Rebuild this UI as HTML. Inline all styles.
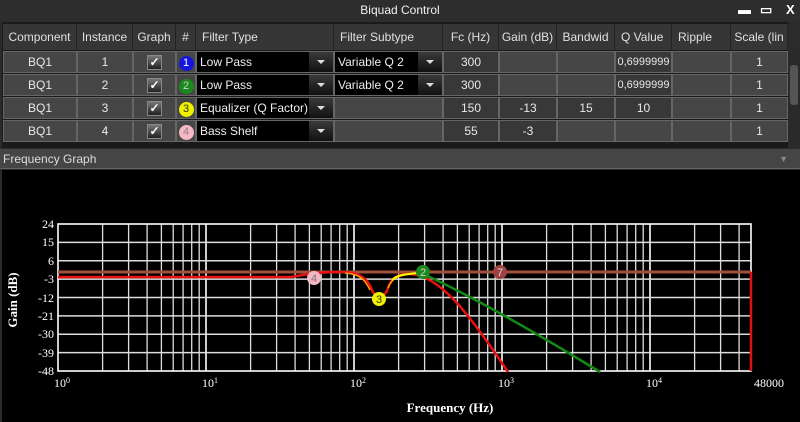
<!DOCTYPE html>
<html><head><meta charset="utf-8"><style>
*{margin:0;padding:0;box-sizing:border-box}
body{width:800px;height:422px;background:#2b2b2b;overflow:hidden;font-family:"Liberation Sans",sans-serif;color:#e8e8e8;position:relative}
.t{position:absolute;left:0;top:0;width:800px;height:22px;background:#2d2d2d;text-align:center;font-size:12px;line-height:20px;color:#f0f0f0}
.wb{position:absolute;top:2px;font-size:13px;font-weight:bold;color:#fff}
.c{position:absolute;font-size:12px;text-align:center;overflow:hidden;white-space:nowrap}
.h{background:#363636;color:#e0e0e0;height:26px;line-height:26px;top:24px;border-right:1px solid #222}
.d{background:#464646;border:1px solid #666;height:22px;line-height:20px}
.dk{background:#383838}
.sel{background:#000;text-align:left;padding-left:3px;color:#eee}
.arr{position:absolute;right:0;top:0;width:24px;height:100%;background:linear-gradient(#3a3a3a,#111)}
.arr:after{content:"";position:absolute;left:8px;top:8px;border:4px solid transparent;border-top:4px solid #ddd}
.cb{display:inline-block;width:15px;height:15px;background:linear-gradient(#777,#222);border:1px solid #888;margin-top:2px;font-size:12px;line-height:13px;color:#fff;font-weight:bold}
.n{display:inline-block;width:15px;height:15px;border-radius:50%;font-size:11px;line-height:15px;margin-top:2px}
</style></head><body>
<div class="t">Biquad Control</div>
<div class="wb" style="left:738px">▬</div><div class="wb" style="left:760px">▭</div><div class="wb" style="left:786px">X</div>
<div style="position:absolute;left:2px;top:22px;width:786px;height:126px;background:#1a1a1a"></div>
<div class="c h" style="left:3px;width:74px">Component</div>
<div class="c h" style="left:77px;width:56px">Instance</div>
<div class="c h" style="left:133px;width:43px">Graph</div>
<div class="c h" style="left:176px;width:20px">#</div>
<div class="c h" style="left:196px;width:138px;text-align:left;padding-left:6px">Filter Type</div>
<div class="c h" style="left:334px;width:109px;text-align:left;padding-left:6px">Filter Subtype</div>
<div class="c h" style="left:443px;width:56px">Fc (Hz)</div>
<div class="c h" style="left:499px;width:58px">Gain (dB)</div>
<div class="c h" style="left:557px;width:58px">Bandwid</div>
<div class="c h" style="left:615px;width:57px;text-align:left;padding-left:6px">Q Value</div>
<div class="c h" style="left:672px;width:59px;text-align:left;padding-left:6px">Ripple</div>
<div class="c h" style="left:731px;width:57px">Scale (lin</div>
<div style="position:absolute;left:788px;top:50px;width:12px;height:92px;background:#2a2a2a"><div style="margin:15px 2px;height:40px;background:#555;border-radius:3px"></div></div>

<!-- rows -->
<div id="rows"></div>
<div class="c d" style="left:3px;top:51px;width:74px">BQ1</div><div class="c d" style="left:77px;top:51px;width:56px">1</div><div class="c d" style="left:133px;top:51px;width:43px"><span class="cb">✓</span></div><div class="c d" style="left:176px;top:51px;width:20px"><span class="n" style="background:#1515e0;color:#fff">1</span></div><div class="c d sel" style="left:196px;top:51px;width:138px">Low Pass<div class="arr"></div></div><div class="c d sel" style="left:334px;top:51px;width:109px">Variable Q 2<div class="arr"></div></div><div class="c d dk" style="left:443px;top:51px;width:56px">300</div><div class="c d" style="left:499px;top:51px;width:58px"></div><div class="c d" style="left:557px;top:51px;width:58px"></div><div class="c d dk" style="left:615px;top:51px;width:57px;font-size:11px">0,6999999</div><div class="c d" style="left:672px;top:51px;width:59px"></div><div class="c d" style="left:731px;top:51px;width:57px">1</div>

<div class="c d" style="left:3px;top:74px;width:74px">BQ1</div><div class="c d" style="left:77px;top:74px;width:56px">2</div><div class="c d" style="left:133px;top:74px;width:43px"><span class="cb">✓</span></div><div class="c d" style="left:176px;top:74px;width:20px"><span class="n" style="background:#1a8a1a;color:#ccc">2</span></div><div class="c d sel" style="left:196px;top:74px;width:138px">Low Pass<div class="arr"></div></div><div class="c d sel" style="left:334px;top:74px;width:109px">Variable Q 2<div class="arr"></div></div><div class="c d dk" style="left:443px;top:74px;width:56px">300</div><div class="c d" style="left:499px;top:74px;width:58px"></div><div class="c d" style="left:557px;top:74px;width:58px"></div><div class="c d dk" style="left:615px;top:74px;width:57px;font-size:11px">0,6999999</div><div class="c d" style="left:672px;top:74px;width:59px"></div><div class="c d" style="left:731px;top:74px;width:57px">1</div>

<div class="c d" style="left:3px;top:97px;width:74px">BQ1</div><div class="c d" style="left:77px;top:97px;width:56px">3</div><div class="c d" style="left:133px;top:97px;width:43px"><span class="cb">✓</span></div><div class="c d" style="left:176px;top:97px;width:20px"><span class="n" style="background:#f0f000;color:#333">3</span></div><div class="c d sel" style="left:196px;top:97px;width:138px">Equalizer (Q Factor)<div class="arr"></div></div><div class="c d" style="left:334px;top:97px;width:109px"></div><div class="c d dk" style="left:443px;top:97px;width:56px">150</div><div class="c d dk" style="left:499px;top:97px;width:58px">-13</div><div class="c d dk" style="left:557px;top:97px;width:58px">15</div><div class="c d dk" style="left:615px;top:97px;width:57px">10</div><div class="c d" style="left:672px;top:97px;width:59px"></div><div class="c d" style="left:731px;top:97px;width:57px">1</div>

<div class="c d" style="left:3px;top:120px;width:74px">BQ1</div><div class="c d" style="left:77px;top:120px;width:56px">4</div><div class="c d" style="left:133px;top:120px;width:43px"><span class="cb">✓</span></div><div class="c d" style="left:176px;top:120px;width:20px"><span class="n" style="background:#f5b8c4;color:#888">4</span></div><div class="c d sel" style="left:196px;top:120px;width:138px">Bass Shelf<div class="arr"></div></div><div class="c d" style="left:334px;top:120px;width:109px"></div><div class="c d dk" style="left:443px;top:120px;width:56px">55</div><div class="c d dk" style="left:499px;top:120px;width:58px">-3</div><div class="c d" style="left:557px;top:120px;width:58px"></div><div class="c d" style="left:615px;top:120px;width:57px"></div><div class="c d" style="left:672px;top:120px;width:59px"></div><div class="c d" style="left:731px;top:120px;width:57px">1</div>

<div style="position:absolute;left:0;top:149px;width:800px;height:20px;background:#454545;border-bottom:1px solid #666;font-size:12px;line-height:20px;padding-left:3px;color:#ddd">Frequency Graph<span style="position:absolute;right:12px;color:#888;font-size:9px">▼</span></div>
<div style="position:absolute;left:2px;top:170px;width:798px;height:252px;background:#000"></div>

<svg style="position:absolute;left:0;top:0" width="800" height="422">
<defs><g id="dec" stroke="#ddd" stroke-width="1.3">
<line x1="44.6" y1="224" x2="44.6" y2="371"/><line x1="70.6" y1="224" x2="70.6" y2="371"/><line x1="89.1" y1="224" x2="89.1" y2="371"/><line x1="103.4" y1="224" x2="103.4" y2="371"/><line x1="115.2" y1="224" x2="115.2" y2="371"/><line x1="125.1" y1="224" x2="125.1" y2="371"/><line x1="133.7" y1="224" x2="133.7" y2="371"/><line x1="141.2" y1="224" x2="141.2" y2="371"/><line x1="148" y1="224" x2="148" y2="371" stroke="#fff" stroke-width="1.6"/>
</g>
<clipPath id="cp"><rect x="58" y="224" width="693" height="148"/></clipPath></defs>
<g clip-path="url(#cp)">
<use href="#dec" x="58"/><use href="#dec" x="206"/><use href="#dec" x="354"/><use href="#dec" x="502"/><use href="#dec" x="650"/>
</g>
<g stroke="#ddd" stroke-width="1.5">
<line x1="58" y1="242.4" x2="751" y2="242.4"/><line x1="58" y1="260.8" x2="751" y2="260.8"/><line x1="58" y1="279.1" x2="751" y2="279.1"/><line x1="58" y1="297.5" x2="751" y2="297.5"/><line x1="58" y1="315.9" x2="751" y2="315.9"/><line x1="58" y1="334.3" x2="751" y2="334.3"/><line x1="58" y1="352.6" x2="751" y2="352.6"/>
</g>
<rect x="58" y="224" width="693" height="147" fill="none" stroke="#fff" stroke-width="1.6"/>
<line x1="58" y1="272" x2="751" y2="272" stroke="#a0503c" stroke-width="3"/>
<line x1="751" y1="272" x2="751" y2="371" stroke="#e01010" stroke-width="2.5"/>
<path d="M423 274 C470 295 540 335 600 372" stroke="#138a13" stroke-width="2.5" fill="none"/>
<path d="M58 277 L290 277 C305 275 315 272 340 272 C362 272 368 280 372 290 C375 298 384 300 388 288 C392 276 400 274 410 274 C440 275 470 315 508 372" stroke="#e81010" stroke-width="2.5" fill="none"/>
<path d="M345 273 C362 274 366 282 370 290 M388 288 C392 278 398 275 412 274" stroke="#ff9a00" stroke-width="1.5" fill="none"/>
<path d="M392 280 C396 276 402 274 420 273" stroke="#ffff00" stroke-width="2" fill="none"/>
<circle cx="314" cy="278" r="7" fill="#f5b8c4"/><text x="314" y="282" font-size="11" fill="#777" text-anchor="middle" font-family="Liberation Sans">4</text>
<circle cx="379" cy="299" r="7" fill="#f0f000"/><text x="379" y="303" font-size="11" fill="#333" text-anchor="middle" font-family="Liberation Sans">3</text>
<circle cx="423" cy="272" r="7" fill="#1a8a1a"/><text x="423" y="276" font-size="11" fill="#ccc" text-anchor="middle" font-family="Liberation Sans">2</text>
<circle cx="500" cy="272" r="7" fill="#a04040"/><text x="500" y="276" font-size="11" fill="#ddd" text-anchor="middle" font-family="Liberation Sans">7</text>
<g font-family="Liberation Serif" font-size="12" fill="#fff" text-anchor="end">
<text x="54" y="228">24</text><text x="54" y="246">15</text><text x="54" y="265">6</text><text x="54" y="283">-3</text><text x="54" y="302">-12</text><text x="54" y="320">-21</text><text x="54" y="338">-30</text><text x="54" y="357">-39</text><text x="54" y="375">-48</text>
</g>
<g font-family="Liberation Serif" font-size="12" fill="#fff" text-anchor="middle">
<text x="62" y="387">10<tspan font-size="8" dy="-4">0</tspan></text>
<text x="210" y="387">10<tspan font-size="8" dy="-4">1</tspan></text>
<text x="358" y="387">10<tspan font-size="8" dy="-4">2</tspan></text>
<text x="506" y="387">10<tspan font-size="8" dy="-4">3</tspan></text>
<text x="654" y="387">10<tspan font-size="8" dy="-4">4</tspan></text>
<text x="769" y="387">48000</text>
</g>
<text x="450" y="412" font-family="Liberation Serif" font-size="13" font-weight="bold" fill="#fff" text-anchor="middle">Frequency (Hz)</text>
<text transform="translate(17,300) rotate(-90)" font-family="Liberation Serif" font-size="13" font-weight="bold" fill="#fff" text-anchor="middle">Gain (dB)</text>
</svg>
</body></html>
